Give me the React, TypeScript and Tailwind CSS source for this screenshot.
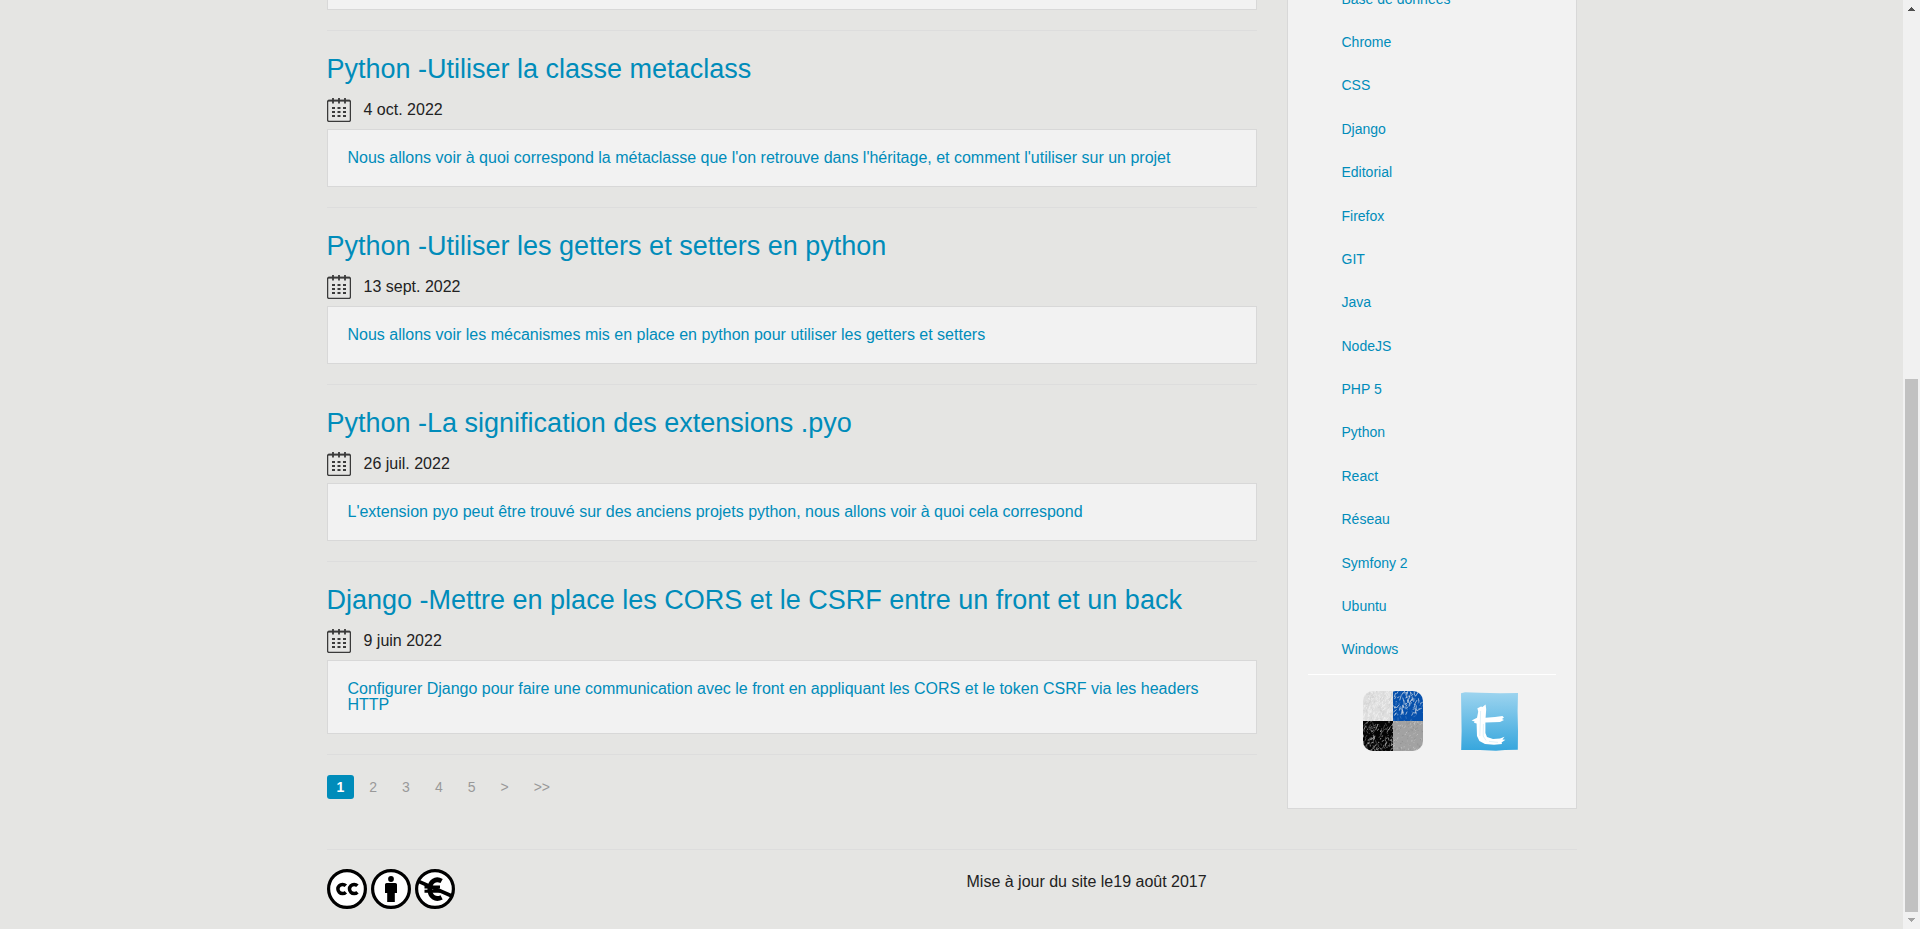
import React from "react";

type Article = { title: string; date: string; summary: string };

const articles: Article[] = [
  {
    title: "Python -Utiliser la classe metaclass",
    date: "4 oct. 2022",
    summary:
      "Nous allons voir à quoi correspond la métaclasse que l'on retrouve dans l'héritage, et comment l'utiliser sur un projet",
  },
  {
    title: "Python -Utiliser les getters et setters en python",
    date: "13 sept. 2022",
    summary: "Nous allons voir les mécanismes mis en place en python pour utiliser les getters et setters",
  },
  {
    title: "Python -La signification des extensions .pyo",
    date: "26 juil. 2022",
    summary: "L'extension pyo peut être trouvé sur des anciens projets python, nous allons voir à quoi cela correspond",
  },
  {
    title: "Django -Mettre en place les CORS et le CSRF entre un front et un back",
    date: "9 juin 2022",
    summary:
      "Configurer Django pour faire une communication avec le front en appliquant les CORS et le token CSRF via les headers HTTP",
  },
];

const categories = [
  "Base de données",
  "Chrome",
  "CSS",
  "Django",
  "Editorial",
  "Firefox",
  "GIT",
  "Java",
  "NodeJS",
  "PHP 5",
  "Python",
  "React",
  "Réseau",
  "Symfony 2",
  "Ubuntu",
  "Windows",
];

const pages = ["2", "3", "4", "5", ">", ">>"];

function CalendarIcon() {
  return (
    <svg viewBox="0 0 24 24" className="size-6 shrink-0" aria-hidden="true">
      <rect x="0.6" y="2.4" width="22.8" height="21" rx="1.4" fill="none" stroke="#3a3a3a" strokeWidth="1.3" />
      <path d="M1 2.7H23" stroke="#3a3a3a" strokeWidth="1.8" />
      <path d="M6 0V5.6M12 0V5.6M18 0V5.6" stroke="#3a3a3a" strokeWidth="1.8" />
      <path d="M5 10H19M5 14H19M5 18H19" stroke="#3a3a3a" strokeWidth="2" strokeDasharray="3 2.5" />
    </svg>
  );
}

// Small deterministic generator so that the crayon strokes are the same on every render.
function scratches(seed: number, count: number, x: number, y: number, size: number, length: number) {
  let s = seed * 7919;
  const next = () => {
    s = (s * 16807) % 2147483647;
    return s / 2147483647;
  };
  let d = "";
  for (let i = 0; i < count; i++) {
    const px = x + next() * size;
    const py = y + next() * size;
    const dx = (next() - 0.35) * length;
    const dy = -next() * length;
    d += `M${px.toFixed(1)} ${py.toFixed(1)}l${dx.toFixed(1)} ${dy.toFixed(1)}`;
  }
  return d;
}

function DeliciousIcon() {
  return (
    <svg viewBox="0 0 60 60" className="size-[60px]" aria-hidden="true">
      <defs>
        <clipPath id="tile">
          <rect width="60" height="60" rx="10" />
        </clipPath>
        <clipPath id="tl"><rect width="30" height="30" /></clipPath>
        <clipPath id="tr"><rect x="30" width="30" height="30" /></clipPath>
        <clipPath id="bl"><rect y="30" width="30" height="30" /></clipPath>
        <clipPath id="br"><rect x="30" y="30" width="30" height="30" /></clipPath>
      </defs>
      <g clipPath="url(#tile)" fill="none">
        <g clipPath="url(#tl)">
          <rect width="30" height="30" fill="#dedede" />
          <path d={scratches(11, 170, 0, 0, 32, 5)} stroke="#f0f0f0" strokeWidth="0.7" />
          <path d={scratches(23, 80, 0, 0, 32, 4)} stroke="#cccccc" strokeWidth="0.6" />
        </g>
        <g clipPath="url(#tr)">
          <rect x="30" width="30" height="30" fill="#0650ac" />
          <path d={scratches(37, 80, 30, -2, 27, 5)} stroke="#c3d0e2" strokeWidth="0.8" />
          <path d={scratches(41, 50, 30, 0, 32, 4)} stroke="#4f83c2" strokeWidth="0.6" />
        </g>
        <g clipPath="url(#bl)">
          <rect y="30" width="30" height="30" fill="#050505" />
          <path d={scratches(53, 70, 0, 31, 31, 4)} stroke="#c8c8c8" strokeWidth="0.7" />
          <path d={scratches(59, 70, 0, 31, 31, 4)} stroke="#666666" strokeWidth="0.7" />
        </g>
        <g clipPath="url(#br)">
          <rect x="30" y="30" width="30" height="30" fill="#a2a2a2" />
          <path d={scratches(67, 80, 30, 30, 32, 2)} stroke="#c8c8c8" strokeWidth="0.7" />
          <path d={scratches(71, 60, 30, 30, 32, 2)} stroke="#8c8c8c" strokeWidth="0.7" />
        </g>
      </g>
    </svg>
  );
}

function TwitterIcon() {
  return (
    <svg viewBox="0 0 60 60" className="size-[60px]" aria-hidden="true">
      <defs>
        <linearGradient id="sky" x1="0" y1="0" x2="0" y2="1">
          <stop offset="0" stopColor="#9dd4ef" />
          <stop offset="1" stopColor="#36a6dd" />
        </linearGradient>
      </defs>
      <path d="M1 2.2L5 1.2L20 1.8L40 2.3L58 2L57.6 20L58 40L57.8 58.8L45 59L36 59.7L20 59L1.2 59L1.6 40L1.3 20Z" fill="url(#sky)" />
      <path
        d="M18 17L21 15.4L22.4 16L25.6 13.4L26.2 18.2L25.6 26.8L35 26L42.4 25L44 26.4L42 28L44 29L40 31L25.4 31.6L25.4 42L27 46L33 48L40 47.6L44.6 45.8L42.4 48.6L45.4 48.8L41.6 51.6L42 53L34 53.8L25 53L19.4 50L17 45L16.6 32.4L14 31.8L14.6 30.4L11.6 29.4L17 26.8L18.2 20.8L17.4 17.2Z"
        fill="#fff"
      />
      <path d="M20.6 20L19.8 45M23.4 33L23.2 45L26 49.5M29 50.4L38 51.4" fill="none" stroke="#bfe2f3" strokeWidth="0.5" />
    </svg>
  );
}

function Badge({ children }: { children: React.ReactNode }) {
  return (
    <svg viewBox="0 0 40 40" className="size-10" fill="none" stroke="#000" aria-hidden="true">
      <circle cx="20" cy="20" r="18.4" fill="#fff" strokeWidth="3.2" />
      {children}
    </svg>
  );
}

function ScrollRail() {
  return (
    <div className="flex w-[17px] shrink-0 flex-col items-center bg-[#f1f1f1]" aria-hidden="true">
      <svg viewBox="0 0 17 17" className="size-[17px]" shapeRendering="crispEdges">
        <path d="M5 11V10H6V9H7V8H8V7H9V8H10V9H11V10H12V11Z" fill="#505050" />
      </svg>
      <div className="flex w-[13px] flex-1 flex-col">
        <div className="flex-[362]" />
        <div className="flex-[533] bg-[#c1c1c1]" />
      </div>
      <svg viewBox="0 0 17 17" className="size-[17px]" shapeRendering="crispEdges">
        <path d="M5 6V7H6V8H7V9H8V10H9V9H10V8H11V7H12V6Z" fill="#a3a3a3" />
      </svg>
    </div>
  );
}

export default function App() {
  return (
    <div className="flex min-h-screen overflow-hidden bg-[#e5e5e3] font-['Liberation_Sans',Arial,sans-serif] text-base text-[#222]">
      <div className="min-w-0 flex-1">
        <div className="mx-auto max-w-[1250px]">
          <div className="flex gap-[30px]">
            <main className="min-w-0 flex-1">
              <div className="h-[10px] border border-t-0 border-[#d8d8d8] bg-[#f2f2f2]" />
              <hr className="mt-5 border-[#ddd]" />
              {articles.map((a) => (
                <article key={a.title}>
                  <h2 className="mt-5 text-[27px] leading-9 text-[#008cba]">
                    <a href="#article">{a.title}</a>
                  </h2>
                  <div className="mt-[11px] mb-[7px] flex h-6 items-center gap-[13px]">
                    <CalendarIcon />
                    <time>{a.date}</time>
                  </div>
                  <div className="border border-[#d8d8d8] bg-[#f2f2f2] p-5 leading-4">
                    <a href="#article" className="block text-[#008cba]">
                      {a.summary}
                    </a>
                  </div>
                  <hr className="mt-5 border-[#ddd]" />
                </article>
              ))}
              <nav aria-label="Pagination" className="mt-5 flex gap-[5px] text-sm leading-6 text-[#999]">
                <a href="#page" aria-current="page" className="rounded-[3px] bg-[#008cba] px-[10px] font-bold text-white">
                  1
                </a>
                {pages.map((p) => (
                  <a key={p} href="#page" className="px-[10px]">
                    {p}
                  </a>
                ))}
              </nav>
            </main>
            <aside className="w-[290px] shrink-0 border border-t-0 border-[#d8d8d8] bg-[#f2f2f2] px-5 pb-[57px]">
              <ul className="-mt-[23px] grid h-[694px] auto-rows-fr items-center pl-[34px] text-sm leading-5 text-[#008cba]">
                {categories.map((c) => (
                  <li key={c}>
                    <a href="#categorie">{c}</a>
                  </li>
                ))}
              </ul>
              <hr className="mt-[3px] border-white" />
              <div className="mt-4 flex justify-center gap-[37px] pl-5">
                <a href="#delicious" aria-label="Delicious">
                  <DeliciousIcon />
                </a>
                <a href="#twitter" aria-label="Twitter">
                  <TwitterIcon />
                </a>
              </div>
            </aside>
          </div>
          <hr className="mt-10 border-[#ddd]" />
          <footer className="grid grid-cols-[640px_1fr] pt-[19px] pb-5">
            <div className="flex gap-1">
              <Badge>
                <path d="M18.8 16.8A4.6 4.6 0 1 0 18.8 23.2M30.4 16.8A4.6 4.6 0 1 0 30.4 23.2" strokeWidth="3.5" />
              </Badge>
              <Badge>
                <circle cx="20" cy="10" r="2.9" fill="#000" stroke="none" />
                <path d="M15.6 14H24.4Q26 14 26 15.6V24H23.8V33H16.2V24H14V15.6Q14 14 15.6 14Z" fill="#000" stroke="none" />
              </Badge>
              <Badge>
                <path d="M26.6 12C20.6 8.8 14.8 12.4 14.8 20C14.8 28 20.6 31.4 26.6 28.4" strokeWidth="4.8" />
                <path d="M9.5 18H25M9.5 22.2H25" strokeWidth="3" />
                <path d="M3.6 12.4L36.8 27" strokeWidth="3.6" />
              </Badge>
            </div>
            <p className="leading-[26px]">Mise à jour du site le19 août 2017</p>
          </footer>
        </div>
      </div>
      <ScrollRail />
    </div>
  );
}
